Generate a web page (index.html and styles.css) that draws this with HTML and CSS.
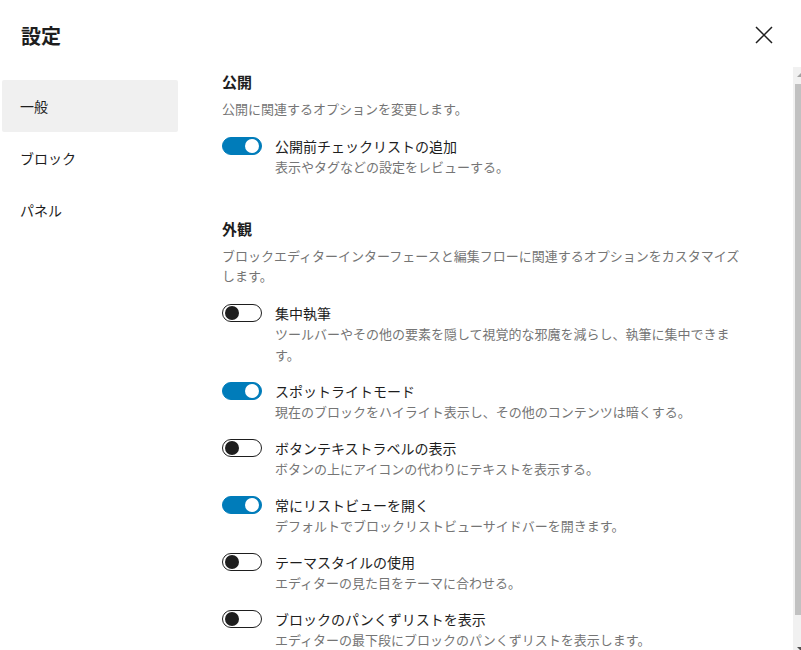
FILE: index.html
```html
<!DOCTYPE html>
<html lang="ja">
<head>
    <meta charset="UTF-8">
    <meta name="viewport" content="width=device-width, initial-scale=1.0">
    <title>設定</title>
    <link rel="stylesheet" href="styles.css">
</head>
<body>
    <div class="modal">
        <header class="modal-header">
            <h1>設定</h1>
            <button class="close-btn" aria-label="閉じる">
                <svg width="24" height="24" viewBox="0 0 24 24">
                    <path d="M4 4 L20 20 M20 4 L4 20" stroke="#1e1e1e" stroke-width="1.5" fill="none"/>
                </svg>
            </button>
        </header>

        <div class="modal-body">
            <nav class="tabs">
                <a class="tab active">一般</a>
                <a class="tab">ブロック</a>
                <a class="tab">パネル</a>
            </nav>

            <div class="panel">
                <section class="section">
                    <h2 class="section-title">公開</h2>
                    <p class="section-desc">公開に関連するオプションを変更します。</p>
                    <div class="option">
                        <span class="toggle is-on"></span>
                        <div class="option-text">
                            <div class="option-label">公開前チェックリストの追加</div>
                            <div class="option-help">表示やタグなどの設定をレビューする。</div>
                        </div>
                    </div>
                </section>

                <section class="section">
                    <h2 class="section-title">外観</h2>
                    <p class="section-desc">ブロックエディターインターフェースと編集フローに関連するオプションをカスタマイズします。</p>
                    <div class="option">
                        <span class="toggle"></span>
                        <div class="option-text">
                            <div class="option-label">集中執筆</div>
                            <div class="option-help">ツールバーやその他の要素を隠して視覚的な邪魔を減らし、執筆に集中できます。</div>
                        </div>
                    </div>
                    <div class="option">
                        <span class="toggle is-on"></span>
                        <div class="option-text">
                            <div class="option-label">スポットライトモード</div>
                            <div class="option-help">現在のブロックをハイライト表示し、その他のコンテンツは暗くする。</div>
                        </div>
                    </div>
                    <div class="option">
                        <span class="toggle"></span>
                        <div class="option-text">
                            <div class="option-label">ボタンテキストラベルの表示</div>
                            <div class="option-help">ボタンの上にアイコンの代わりにテキストを表示する。</div>
                        </div>
                    </div>
                    <div class="option">
                        <span class="toggle is-on"></span>
                        <div class="option-text">
                            <div class="option-label">常にリストビューを開く</div>
                            <div class="option-help">デフォルトでブロックリストビューサイドバーを開きます。</div>
                        </div>
                    </div>
                    <div class="option">
                        <span class="toggle"></span>
                        <div class="option-text">
                            <div class="option-label">テーマスタイルの使用</div>
                            <div class="option-help">エディターの見た目をテーマに合わせる。</div>
                        </div>
                    </div>
                    <div class="option">
                        <span class="toggle"></span>
                        <div class="option-text">
                            <div class="option-label">ブロックのパンくずリストを表示</div>
                            <div class="option-help">エディターの最下段にブロックのパンくずリストを表示します。</div>
                        </div>
                    </div>
                </section>
            </div>

            <div class="scrollbar">
                <span class="scroll-btn"><i class="arrow-up"></i></span>
                <span class="scroll-thumb"></span>
                <span class="scroll-btn"><i class="arrow-down"></i></span>
            </div>
        </div>
    </div>
</body>
</html>
```

FILE: styles.css
```css
* {
    margin: 0;
    padding: 0;
    box-sizing: border-box;
}

html, body {
    overflow: hidden;
}

body {
    width: 801px;
    height: 650px;
    background-color: #ffffff;
    color: #1e1e1e;
    font-family: "Noto Sans CJK JP", "Noto Sans", sans-serif;
}

.modal {
    width: 808px;
    height: 656px;
    display: flex;
    flex-direction: column;
}

.modal-header {
    height: 67px;
    flex-shrink: 0;
    display: flex;
    justify-content: space-between;
    align-items: flex-start;
    padding: 24px 32px 0 21px;
}

.modal-header h1 {
    font-size: 20px;
    line-height: 24px;
    font-weight: 700;
}

.close-btn {
    width: 24px;
    height: 24px;
    margin-top: -1px;
    border: none;
    background-color: transparent;
    display: flex;
    align-items: center;
    justify-content: center;
    cursor: pointer;
}

.modal-body {
    flex: 1;
    min-height: 0;
    display: flex;
}

.tabs {
    width: 200px;
    flex-shrink: 0;
    padding: 13px 22px 0 2px;
}

.tab {
    display: flex;
    align-items: center;
    height: 52px;
    padding-left: 18px;
    font-size: 14px;
    color: #1e1e1e;
    border-radius: 2px;
    cursor: pointer;
}

.tab.active {
    background-color: #f0f0f0;
}

.panel {
    flex: 1;
    overflow: hidden;
    padding: 5px 50px 20px 22px;
}

/* scrollbar drawn by hand, the screenshot browser hides native ones */
.scrollbar {
    width: 15px;
    flex-shrink: 0;
    display: flex;
    flex-direction: column;
    background-color: #f1f1f1;
}

.scroll-btn {
    height: 15px;
    display: flex;
    align-items: center;
    justify-content: center;
}

.scroll-btn:last-child {
    margin-top: auto;
}

.scroll-thumb {
    height: 531px;
    margin: 2px 2px 0;
    background-color: #c1c1c1;
}

.arrow-up {
    border-left: 4px solid transparent;
    border-right: 4px solid transparent;
    border-bottom: 4px solid #a3a3a3;
}

.arrow-down {
    border-left: 4px solid transparent;
    border-right: 4px solid transparent;
    border-top: 4px solid #505050;
}

.section + .section {
    margin-top: 42px;
}

.section-title {
    font-size: 15px;
    line-height: 20px;
    font-weight: 700;
    margin-bottom: 7px;
}

.section-desc {
    font-size: 13px;
    line-height: 20px;
    color: #757575;
    margin-bottom: 17px;
}

.option {
    display: flex;
    align-items: flex-start;
    gap: 13px;
    padding-right: 11px;
    margin-bottom: 16px;
}

.option-label {
    font-size: 14px;
    line-height: 20px;
}

.option-help {
    font-size: 13px;
    line-height: 21px;
    color: #757575;
}

.toggle {
    position: relative;
    flex-shrink: 0;
    width: 40px;
    height: 18px;
    margin-top: 1px;
    border: 1px solid #1e1e1e;
    border-radius: 9px;
    background-color: #ffffff;
}

.toggle::before {
    content: "";
    position: absolute;
    top: 1px;
    left: 2px;
    width: 14px;
    height: 14px;
    border-radius: 50%;
    background-color: #1e1e1e;
}

.toggle.is-on {
    background-color: #007cba;
    border-color: #007cba;
}

.toggle.is-on::before {
    left: 22px;
    background-color: #ffffff;
}
```
